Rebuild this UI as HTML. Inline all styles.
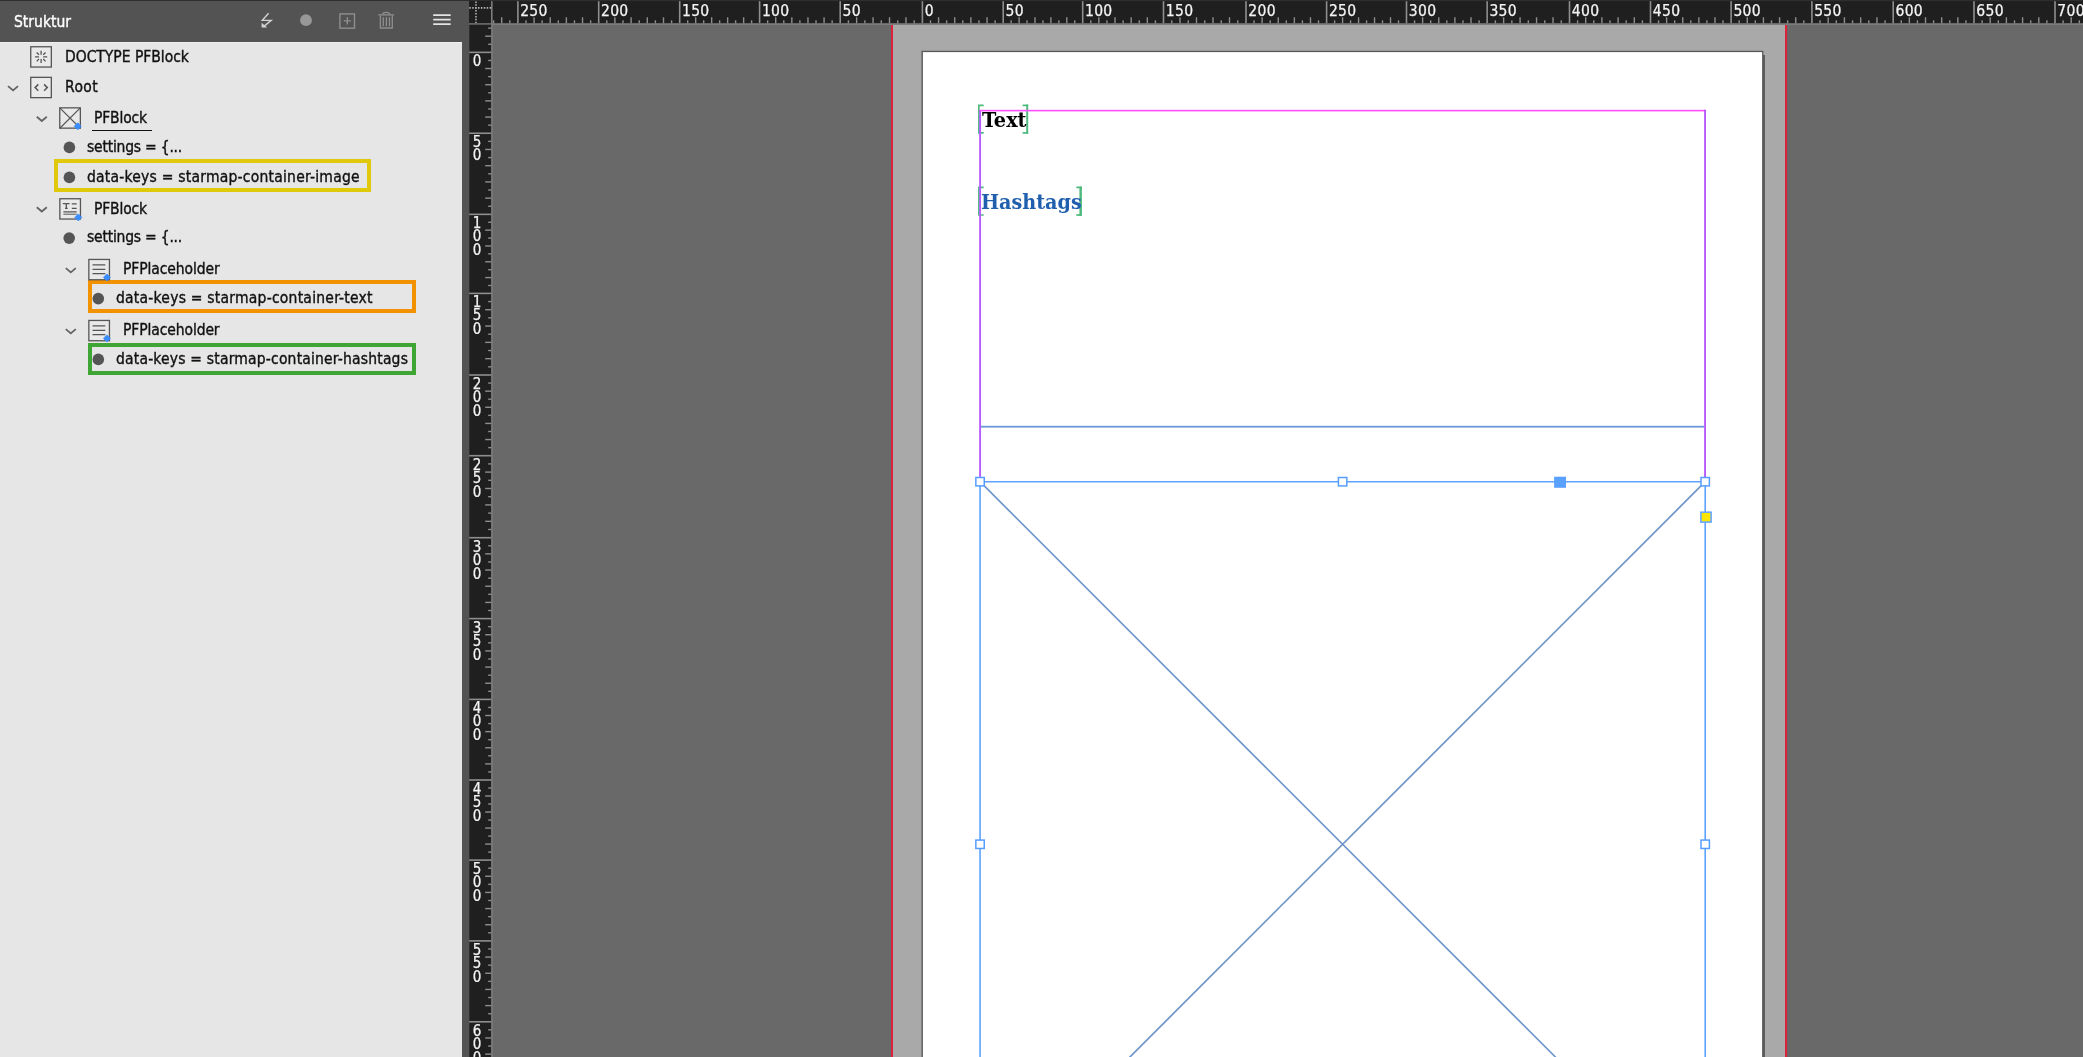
<!DOCTYPE html>
<html lang="de"><head><meta charset="utf-8"><title>Struktur</title>
<style>
html,body{margin:0;padding:0}
body{width:2083px;height:1057px;overflow:hidden;position:relative;background:#696969;font-family:"DejaVu Sans Condensed","DejaVu Sans","Liberation Sans",sans-serif}
.abs{position:absolute}
#panel{position:absolute;left:0;top:0;width:462.2px;height:1057px;background:#e6e6e6}
#phead{position:absolute;left:0;top:0;width:469.2px;height:41.9px;background:#535353}
#pdiv{position:absolute;left:462.2px;top:0;width:7px;height:1057px;background:#535353}
#ttl{position:absolute;will-change:transform;left:14px;top:11.7px;transform:translateY(0.4px);-webkit-text-stroke:0.35px #fff;font-size:15.5px;line-height:20px;color:#fff;white-space:nowrap}
.row{position:absolute;will-change:transform;font-size:15.5px;line-height:20px;height:20px;color:#111;white-space:nowrap;-webkit-text-stroke:0.35px #111}
.hy{display:inline-block;transform:scaleX(1.45);margin:0 1px}
.hl{position:absolute;box-sizing:border-box;border-style:solid;border-width:4.3px}
svg{position:absolute;left:0;top:0;overflow:visible;will-change:transform}
.rl{font-family:"DejaVu Sans Condensed","DejaVu Sans","Liberation Sans",sans-serif;font-size:15.5px;letter-spacing:0.3px;fill:#f4f4f4;stroke:#f4f4f4;stroke-width:0.25px}
.vl{position:absolute;will-change:transform;left:470px;width:14px;writing-mode:vertical-rl;text-orientation:upright;font-family:"DejaVu Sans Condensed","DejaVu Sans","Liberation Sans",sans-serif;font-size:15px;line-height:14px;letter-spacing:-4.7px;color:#f4f4f4;-webkit-text-stroke:0.25px #f4f4f4;white-space:nowrap}
.pt{position:absolute;will-change:transform;font-family:"DejaVu Serif Condensed","DejaVu Serif","Liberation Serif",serif;font-weight:bold;font-size:20.4px;line-height:26px;white-space:nowrap;transform-origin:0 0}
</style></head><body>

<svg width="2083" height="1057" viewBox="0 0 2083 1057" id="canvas">
<rect x="892" y="24.5" width="894" height="1040" fill="#a9a9a9"/>
<rect x="891" y="24.5" width="2" height="1040" fill="#dc213b"/>
<rect x="1785" y="24.5" width="2.1" height="1040" fill="#dc213b"/>
<rect x="1763" y="55" width="2" height="1010" fill="#5e5e5e"/>
<rect x="921.5" y="50.8" width="841.9" height="1010" fill="#575757"/>
<rect x="922.9" y="52.1" width="839.2" height="1010" fill="#ffffff"/>
<path d="M983.70 105.40H978.90V132.90H983.70" stroke="#4fba7d" stroke-width="1.7" fill="none"/>
<rect x="1026.20" y="104.55" width="2.00" height="29.20" fill="#4fba7d"/>
<rect x="1022.60" y="104.55" width="5.60" height="1.7" fill="#4fba7d"/>
<rect x="1022.60" y="132.05" width="5.60" height="1.7" fill="#4fba7d"/>
<path d="M983.70 187.40H978.90V215.00H983.70" stroke="#4fba7d" stroke-width="1.7" fill="none"/>
<rect x="1079.40" y="186.55" width="2.50" height="29.30" fill="#4fba7d"/>
<rect x="1076.30" y="186.55" width="5.60" height="1.7" fill="#4fba7d"/>
<rect x="1076.30" y="214.15" width="5.60" height="1.7" fill="#4fba7d"/>
<rect x="979.2" y="109.8" width="726.8" height="1.6" fill="#ff4dff"/>
<rect x="979.15" y="110.6" width="1.9" height="367" fill="#b75cff"/>
<rect x="1704.15" y="109.8" width="1.85" height="368" fill="#b455ff"/>
<rect x="981" y="425.8" width="723.2" height="1.8" fill="#6a9bd6"/>
<path d="M980.05 481.7L1705.2 1206.8500000000001M1705.2 481.7L980.05 1206.8500000000001" stroke="#6f96cc" stroke-width="1.7" fill="none"/>
<path d="M980.05 1060V481.7H1705.2V1060" stroke="#5da2ff" stroke-width="1.6" fill="none"/>
<rect x="975.85" y="477.50" width="8.4" height="8.4" fill="#fff" stroke="#559eff" stroke-width="1.5"/>
<rect x="1338.42" y="477.50" width="8.4" height="8.4" fill="#fff" stroke="#559eff" stroke-width="1.5"/>
<rect x="1701.00" y="477.50" width="8.4" height="8.4" fill="#fff" stroke="#559eff" stroke-width="1.5"/>
<rect x="975.85" y="840.08" width="8.4" height="8.4" fill="#fff" stroke="#559eff" stroke-width="1.5"/>
<rect x="1701.00" y="840.08" width="8.4" height="8.4" fill="#fff" stroke="#559eff" stroke-width="1.5"/>
<rect x="1554.1" y="476.7" width="11.9" height="11.1" fill="#59a0ff"/>
<rect x="1700.1" y="511.4" width="11.8" height="11.5" fill="#66a8ff"/>
<rect x="1701.7" y="513" width="8.6" height="8.3" fill="#ffe600"/>
</svg>
<div class="pt" style="left:982px;top:107.2px;color:#000;transform:scaleX(1.05)">Text</div>
<div class="pt" style="left:980.5px;top:189px;color:#1f5fae;transform:scaleX(1.045)">Hashtags</div>
<svg width="2083" height="1057" viewBox="0 0 2083 1057" id="rulers">
<rect x="469.2" y="0" width="1614" height="25" fill="#7c7c7c"/>
<rect x="469.2" y="0" width="1614" height="23.2" fill="#1f1f1f"/>
<rect x="469.2" y="0" width="1614" height="1.2" fill="#2e2e2e"/>
<rect x="469.2" y="23.2" width="23.6" height="1057" fill="#7c7c7c"/>
<rect x="469.2" y="24.6" width="21.9" height="1057" fill="#1f1f1f"/>
<rect x="469.2" y="1.2" width="21.9" height="22" fill="#1f1f1f"/>
<g stroke="#b4b4b4" stroke-width="1.6" stroke-dasharray="1.5 1.4" fill="none"><path d="M469.3 7.9H491"/><path d="M475.95 1.4V23"/></g>
<rect x="491" y="1.2" width="1.6" height="23" fill="#7c7c7c"/>
<g fill="#8e8e8e">
<rect x="492.90" y="20.3" width="1.4" height="3" />
<rect x="501.00" y="17.3" width="1.4" height="6" />
<rect x="509.10" y="20.3" width="1.4" height="3" />
<rect x="517.10" y="1.2" width="1.6" height="22" />
<rect x="525.28" y="20.3" width="1.4" height="3" />
<rect x="533.36" y="17.3" width="1.4" height="6" />
<rect x="541.44" y="20.3" width="1.4" height="3" />
<rect x="549.52" y="17.3" width="1.4" height="6" />
<rect x="557.60" y="20.3" width="1.4" height="3" />
<rect x="565.68" y="17.3" width="1.4" height="6" />
<rect x="573.76" y="20.3" width="1.4" height="3" />
<rect x="581.84" y="17.3" width="1.4" height="6" />
<rect x="589.92" y="20.3" width="1.4" height="3" />
<rect x="597.90" y="1.2" width="1.6" height="22" />
<rect x="606.10" y="20.3" width="1.4" height="3" />
<rect x="614.20" y="17.3" width="1.4" height="6" />
<rect x="622.30" y="20.3" width="1.4" height="3" />
<rect x="630.40" y="17.3" width="1.4" height="6" />
<rect x="638.50" y="20.3" width="1.4" height="3" />
<rect x="646.60" y="17.3" width="1.4" height="6" />
<rect x="654.70" y="20.3" width="1.4" height="3" />
<rect x="662.80" y="17.3" width="1.4" height="6" />
<rect x="670.90" y="20.3" width="1.4" height="3" />
<rect x="678.90" y="1.2" width="1.6" height="22" />
<rect x="686.99" y="20.3" width="1.4" height="3" />
<rect x="694.98" y="17.3" width="1.4" height="6" />
<rect x="702.97" y="20.3" width="1.4" height="3" />
<rect x="710.96" y="17.3" width="1.4" height="6" />
<rect x="718.95" y="20.3" width="1.4" height="3" />
<rect x="726.94" y="17.3" width="1.4" height="6" />
<rect x="734.93" y="20.3" width="1.4" height="3" />
<rect x="742.92" y="17.3" width="1.4" height="6" />
<rect x="750.91" y="20.3" width="1.4" height="3" />
<rect x="758.80" y="1.2" width="1.6" height="22" />
<rect x="766.96" y="20.3" width="1.4" height="3" />
<rect x="775.02" y="17.3" width="1.4" height="6" />
<rect x="783.08" y="20.3" width="1.4" height="3" />
<rect x="791.14" y="17.3" width="1.4" height="6" />
<rect x="799.20" y="20.3" width="1.4" height="3" />
<rect x="807.26" y="17.3" width="1.4" height="6" />
<rect x="815.32" y="20.3" width="1.4" height="3" />
<rect x="823.38" y="17.3" width="1.4" height="6" />
<rect x="831.44" y="20.3" width="1.4" height="3" />
<rect x="839.40" y="1.2" width="1.6" height="22" />
<rect x="847.72" y="20.3" width="1.4" height="3" />
<rect x="855.94" y="17.3" width="1.4" height="6" />
<rect x="864.16" y="20.3" width="1.4" height="3" />
<rect x="872.38" y="17.3" width="1.4" height="6" />
<rect x="880.60" y="20.3" width="1.4" height="3" />
<rect x="888.82" y="17.3" width="1.4" height="6" />
<rect x="897.04" y="20.3" width="1.4" height="3" />
<rect x="905.26" y="17.3" width="1.4" height="6" />
<rect x="913.48" y="20.3" width="1.4" height="3" />
<rect x="921.60" y="1.2" width="1.6" height="22" />
<rect x="929.78" y="20.3" width="1.4" height="3" />
<rect x="937.86" y="17.3" width="1.4" height="6" />
<rect x="945.94" y="20.3" width="1.4" height="3" />
<rect x="954.02" y="17.3" width="1.4" height="6" />
<rect x="962.10" y="20.3" width="1.4" height="3" />
<rect x="970.18" y="17.3" width="1.4" height="6" />
<rect x="978.26" y="20.3" width="1.4" height="3" />
<rect x="986.34" y="17.3" width="1.4" height="6" />
<rect x="994.42" y="20.3" width="1.4" height="3" />
<rect x="1002.40" y="1.2" width="1.6" height="22" />
<rect x="1010.45" y="20.3" width="1.4" height="3" />
<rect x="1018.40" y="17.3" width="1.4" height="6" />
<rect x="1026.35" y="20.3" width="1.4" height="3" />
<rect x="1034.30" y="17.3" width="1.4" height="6" />
<rect x="1042.25" y="20.3" width="1.4" height="3" />
<rect x="1050.20" y="17.3" width="1.4" height="6" />
<rect x="1058.15" y="20.3" width="1.4" height="3" />
<rect x="1066.10" y="17.3" width="1.4" height="6" />
<rect x="1074.05" y="20.3" width="1.4" height="3" />
<rect x="1081.90" y="1.2" width="1.6" height="22" />
<rect x="1090.08" y="20.3" width="1.4" height="3" />
<rect x="1098.16" y="17.3" width="1.4" height="6" />
<rect x="1106.24" y="20.3" width="1.4" height="3" />
<rect x="1114.32" y="17.3" width="1.4" height="6" />
<rect x="1122.40" y="20.3" width="1.4" height="3" />
<rect x="1130.48" y="17.3" width="1.4" height="6" />
<rect x="1138.56" y="20.3" width="1.4" height="3" />
<rect x="1146.64" y="17.3" width="1.4" height="6" />
<rect x="1154.72" y="20.3" width="1.4" height="3" />
<rect x="1162.70" y="1.2" width="1.6" height="22" />
<rect x="1171.05" y="20.3" width="1.4" height="3" />
<rect x="1179.30" y="17.3" width="1.4" height="6" />
<rect x="1187.55" y="20.3" width="1.4" height="3" />
<rect x="1195.80" y="17.3" width="1.4" height="6" />
<rect x="1204.05" y="20.3" width="1.4" height="3" />
<rect x="1212.30" y="17.3" width="1.4" height="6" />
<rect x="1220.55" y="20.3" width="1.4" height="3" />
<rect x="1228.80" y="17.3" width="1.4" height="6" />
<rect x="1237.05" y="20.3" width="1.4" height="3" />
<rect x="1245.20" y="1.2" width="1.6" height="22" />
<rect x="1253.36" y="20.3" width="1.4" height="3" />
<rect x="1261.42" y="17.3" width="1.4" height="6" />
<rect x="1269.48" y="20.3" width="1.4" height="3" />
<rect x="1277.54" y="17.3" width="1.4" height="6" />
<rect x="1285.60" y="20.3" width="1.4" height="3" />
<rect x="1293.66" y="17.3" width="1.4" height="6" />
<rect x="1301.72" y="20.3" width="1.4" height="3" />
<rect x="1309.78" y="17.3" width="1.4" height="6" />
<rect x="1317.84" y="20.3" width="1.4" height="3" />
<rect x="1325.80" y="1.2" width="1.6" height="22" />
<rect x="1333.89" y="20.3" width="1.4" height="3" />
<rect x="1341.88" y="17.3" width="1.4" height="6" />
<rect x="1349.87" y="20.3" width="1.4" height="3" />
<rect x="1357.86" y="17.3" width="1.4" height="6" />
<rect x="1365.85" y="20.3" width="1.4" height="3" />
<rect x="1373.84" y="17.3" width="1.4" height="6" />
<rect x="1381.83" y="20.3" width="1.4" height="3" />
<rect x="1389.82" y="17.3" width="1.4" height="6" />
<rect x="1397.81" y="20.3" width="1.4" height="3" />
<rect x="1405.70" y="1.2" width="1.6" height="22" />
<rect x="1413.87" y="20.3" width="1.4" height="3" />
<rect x="1421.93" y="17.3" width="1.4" height="6" />
<rect x="1429.99" y="20.3" width="1.4" height="3" />
<rect x="1438.06" y="17.3" width="1.4" height="6" />
<rect x="1446.12" y="20.3" width="1.4" height="3" />
<rect x="1454.19" y="17.3" width="1.4" height="6" />
<rect x="1462.26" y="20.3" width="1.4" height="3" />
<rect x="1470.32" y="17.3" width="1.4" height="6" />
<rect x="1478.38" y="20.3" width="1.4" height="3" />
<rect x="1486.35" y="1.2" width="1.6" height="22" />
<rect x="1494.68" y="20.3" width="1.4" height="3" />
<rect x="1502.92" y="17.3" width="1.4" height="6" />
<rect x="1511.15" y="20.3" width="1.4" height="3" />
<rect x="1519.39" y="17.3" width="1.4" height="6" />
<rect x="1527.62" y="20.3" width="1.4" height="3" />
<rect x="1535.86" y="17.3" width="1.4" height="6" />
<rect x="1544.10" y="20.3" width="1.4" height="3" />
<rect x="1552.33" y="17.3" width="1.4" height="6" />
<rect x="1560.57" y="20.3" width="1.4" height="3" />
<rect x="1568.70" y="1.2" width="1.6" height="22" />
<rect x="1576.90" y="20.3" width="1.4" height="3" />
<rect x="1585.00" y="17.3" width="1.4" height="6" />
<rect x="1593.10" y="20.3" width="1.4" height="3" />
<rect x="1601.20" y="17.3" width="1.4" height="6" />
<rect x="1609.30" y="20.3" width="1.4" height="3" />
<rect x="1617.40" y="17.3" width="1.4" height="6" />
<rect x="1625.50" y="20.3" width="1.4" height="3" />
<rect x="1633.60" y="17.3" width="1.4" height="6" />
<rect x="1641.70" y="20.3" width="1.4" height="3" />
<rect x="1649.70" y="1.2" width="1.6" height="22" />
<rect x="1657.86" y="20.3" width="1.4" height="3" />
<rect x="1665.92" y="17.3" width="1.4" height="6" />
<rect x="1673.98" y="20.3" width="1.4" height="3" />
<rect x="1682.04" y="17.3" width="1.4" height="6" />
<rect x="1690.10" y="20.3" width="1.4" height="3" />
<rect x="1698.16" y="17.3" width="1.4" height="6" />
<rect x="1706.22" y="20.3" width="1.4" height="3" />
<rect x="1714.28" y="17.3" width="1.4" height="6" />
<rect x="1722.34" y="20.3" width="1.4" height="3" />
<rect x="1730.30" y="1.2" width="1.6" height="22" />
<rect x="1738.48" y="20.3" width="1.4" height="3" />
<rect x="1746.56" y="17.3" width="1.4" height="6" />
<rect x="1754.64" y="20.3" width="1.4" height="3" />
<rect x="1762.72" y="17.3" width="1.4" height="6" />
<rect x="1770.80" y="20.3" width="1.4" height="3" />
<rect x="1778.88" y="17.3" width="1.4" height="6" />
<rect x="1786.96" y="20.3" width="1.4" height="3" />
<rect x="1795.04" y="17.3" width="1.4" height="6" />
<rect x="1803.12" y="20.3" width="1.4" height="3" />
<rect x="1811.10" y="1.2" width="1.6" height="22" />
<rect x="1819.33" y="20.3" width="1.4" height="3" />
<rect x="1827.46" y="17.3" width="1.4" height="6" />
<rect x="1835.59" y="20.3" width="1.4" height="3" />
<rect x="1843.72" y="17.3" width="1.4" height="6" />
<rect x="1851.85" y="20.3" width="1.4" height="3" />
<rect x="1859.98" y="17.3" width="1.4" height="6" />
<rect x="1868.11" y="20.3" width="1.4" height="3" />
<rect x="1876.24" y="17.3" width="1.4" height="6" />
<rect x="1884.37" y="20.3" width="1.4" height="3" />
<rect x="1892.40" y="1.2" width="1.6" height="22" />
<rect x="1900.58" y="20.3" width="1.4" height="3" />
<rect x="1908.66" y="17.3" width="1.4" height="6" />
<rect x="1916.74" y="20.3" width="1.4" height="3" />
<rect x="1924.82" y="17.3" width="1.4" height="6" />
<rect x="1932.90" y="20.3" width="1.4" height="3" />
<rect x="1940.98" y="17.3" width="1.4" height="6" />
<rect x="1949.06" y="20.3" width="1.4" height="3" />
<rect x="1957.14" y="17.3" width="1.4" height="6" />
<rect x="1965.22" y="20.3" width="1.4" height="3" />
<rect x="1973.20" y="1.2" width="1.6" height="22" />
<rect x="1981.40" y="20.3" width="1.4" height="3" />
<rect x="1989.50" y="17.3" width="1.4" height="6" />
<rect x="1997.60" y="20.3" width="1.4" height="3" />
<rect x="2005.70" y="17.3" width="1.4" height="6" />
<rect x="2013.80" y="20.3" width="1.4" height="3" />
<rect x="2021.90" y="17.3" width="1.4" height="6" />
<rect x="2030.00" y="20.3" width="1.4" height="3" />
<rect x="2038.10" y="17.3" width="1.4" height="6" />
<rect x="2046.20" y="20.3" width="1.4" height="3" />
<rect x="2054.20" y="1.2" width="1.6" height="22" />
<rect x="2062.40" y="20.3" width="1.4" height="3" />
<rect x="2070.50" y="17.3" width="1.4" height="6" />
<rect x="2078.60" y="20.3" width="1.4" height="3" />
<rect x="2086.70" y="17.3" width="1.4" height="6" />
<rect x="488.2" y="27.41" width="3" height="1.4" />
<rect x="485.2" y="35.49" width="6" height="1.4" />
<rect x="488.2" y="43.57" width="3" height="1.4" />
<rect x="469.2" y="51.56" width="22" height="1.6" />
<rect x="488.2" y="59.75" width="3" height="1.4" />
<rect x="485.2" y="67.84" width="6" height="1.4" />
<rect x="488.2" y="75.93" width="3" height="1.4" />
<rect x="485.2" y="84.02" width="6" height="1.4" />
<rect x="488.2" y="92.11" width="3" height="1.4" />
<rect x="485.2" y="100.19" width="6" height="1.4" />
<rect x="488.2" y="108.28" width="3" height="1.4" />
<rect x="485.2" y="116.37" width="6" height="1.4" />
<rect x="488.2" y="124.46" width="3" height="1.4" />
<rect x="469.2" y="132.45" width="22" height="1.6" />
<rect x="488.2" y="140.66" width="3" height="1.4" />
<rect x="485.2" y="148.77" width="6" height="1.4" />
<rect x="488.2" y="156.88" width="3" height="1.4" />
<rect x="485.2" y="164.99" width="6" height="1.4" />
<rect x="488.2" y="173.10" width="3" height="1.4" />
<rect x="485.2" y="181.21" width="6" height="1.4" />
<rect x="488.2" y="189.32" width="3" height="1.4" />
<rect x="485.2" y="197.43" width="6" height="1.4" />
<rect x="488.2" y="205.54" width="3" height="1.4" />
<rect x="469.2" y="213.55" width="22" height="1.6" />
<rect x="488.2" y="221.56" width="3" height="1.4" />
<rect x="485.2" y="229.46" width="6" height="1.4" />
<rect x="488.2" y="237.37" width="3" height="1.4" />
<rect x="485.2" y="245.27" width="6" height="1.4" />
<rect x="488.2" y="253.18" width="3" height="1.4" />
<rect x="485.2" y="261.08" width="6" height="1.4" />
<rect x="488.2" y="268.99" width="3" height="1.4" />
<rect x="485.2" y="276.89" width="6" height="1.4" />
<rect x="488.2" y="284.80" width="3" height="1.4" />
<rect x="469.2" y="292.60" width="22" height="1.6" />
<rect x="488.2" y="300.86" width="3" height="1.4" />
<rect x="485.2" y="309.02" width="6" height="1.4" />
<rect x="488.2" y="317.18" width="3" height="1.4" />
<rect x="485.2" y="325.34" width="6" height="1.4" />
<rect x="488.2" y="333.50" width="3" height="1.4" />
<rect x="485.2" y="341.66" width="6" height="1.4" />
<rect x="488.2" y="349.82" width="3" height="1.4" />
<rect x="485.2" y="357.98" width="6" height="1.4" />
<rect x="488.2" y="366.14" width="3" height="1.4" />
<rect x="469.2" y="374.20" width="22" height="1.6" />
<rect x="488.2" y="382.37" width="3" height="1.4" />
<rect x="485.2" y="390.44" width="6" height="1.4" />
<rect x="488.2" y="398.51" width="3" height="1.4" />
<rect x="485.2" y="406.58" width="6" height="1.4" />
<rect x="488.2" y="414.65" width="3" height="1.4" />
<rect x="485.2" y="422.72" width="6" height="1.4" />
<rect x="488.2" y="430.79" width="3" height="1.4" />
<rect x="485.2" y="438.86" width="6" height="1.4" />
<rect x="488.2" y="446.93" width="3" height="1.4" />
<rect x="469.2" y="454.90" width="22" height="1.6" />
<rect x="488.2" y="463.20" width="3" height="1.4" />
<rect x="485.2" y="471.40" width="6" height="1.4" />
<rect x="488.2" y="479.60" width="3" height="1.4" />
<rect x="485.2" y="487.80" width="6" height="1.4" />
<rect x="488.2" y="496.00" width="3" height="1.4" />
<rect x="485.2" y="504.20" width="6" height="1.4" />
<rect x="488.2" y="512.40" width="3" height="1.4" />
<rect x="485.2" y="520.60" width="6" height="1.4" />
<rect x="488.2" y="528.80" width="3" height="1.4" />
<rect x="469.2" y="536.90" width="22" height="1.6" />
<rect x="488.2" y="545.09" width="3" height="1.4" />
<rect x="485.2" y="553.18" width="6" height="1.4" />
<rect x="488.2" y="561.27" width="3" height="1.4" />
<rect x="485.2" y="569.36" width="6" height="1.4" />
<rect x="488.2" y="577.45" width="3" height="1.4" />
<rect x="485.2" y="585.54" width="6" height="1.4" />
<rect x="488.2" y="593.63" width="3" height="1.4" />
<rect x="485.2" y="601.72" width="6" height="1.4" />
<rect x="488.2" y="609.81" width="3" height="1.4" />
<rect x="469.2" y="617.80" width="22" height="1.6" />
<rect x="488.2" y="625.98" width="3" height="1.4" />
<rect x="485.2" y="634.06" width="6" height="1.4" />
<rect x="488.2" y="642.14" width="3" height="1.4" />
<rect x="485.2" y="650.22" width="6" height="1.4" />
<rect x="488.2" y="658.30" width="3" height="1.4" />
<rect x="485.2" y="666.38" width="6" height="1.4" />
<rect x="488.2" y="674.46" width="3" height="1.4" />
<rect x="485.2" y="682.54" width="6" height="1.4" />
<rect x="488.2" y="690.62" width="3" height="1.4" />
<rect x="469.2" y="698.60" width="22" height="1.6" />
<rect x="488.2" y="706.76" width="3" height="1.4" />
<rect x="485.2" y="714.82" width="6" height="1.4" />
<rect x="488.2" y="722.88" width="3" height="1.4" />
<rect x="485.2" y="730.94" width="6" height="1.4" />
<rect x="488.2" y="739.00" width="3" height="1.4" />
<rect x="485.2" y="747.06" width="6" height="1.4" />
<rect x="488.2" y="755.12" width="3" height="1.4" />
<rect x="485.2" y="763.18" width="6" height="1.4" />
<rect x="488.2" y="771.24" width="3" height="1.4" />
<rect x="469.2" y="779.20" width="22" height="1.6" />
<rect x="488.2" y="787.31" width="3" height="1.4" />
<rect x="485.2" y="795.32" width="6" height="1.4" />
<rect x="488.2" y="803.33" width="3" height="1.4" />
<rect x="485.2" y="811.34" width="6" height="1.4" />
<rect x="488.2" y="819.35" width="3" height="1.4" />
<rect x="485.2" y="827.36" width="6" height="1.4" />
<rect x="488.2" y="835.37" width="3" height="1.4" />
<rect x="485.2" y="843.38" width="6" height="1.4" />
<rect x="488.2" y="851.39" width="3" height="1.4" />
<rect x="469.2" y="859.30" width="22" height="1.6" />
<rect x="488.2" y="867.48" width="3" height="1.4" />
<rect x="485.2" y="875.56" width="6" height="1.4" />
<rect x="488.2" y="883.64" width="3" height="1.4" />
<rect x="485.2" y="891.72" width="6" height="1.4" />
<rect x="488.2" y="899.80" width="3" height="1.4" />
<rect x="485.2" y="907.88" width="6" height="1.4" />
<rect x="488.2" y="915.96" width="3" height="1.4" />
<rect x="485.2" y="924.04" width="6" height="1.4" />
<rect x="488.2" y="932.12" width="3" height="1.4" />
<rect x="469.2" y="940.10" width="22" height="1.6" />
<rect x="488.2" y="948.29" width="3" height="1.4" />
<rect x="485.2" y="956.38" width="6" height="1.4" />
<rect x="488.2" y="964.47" width="3" height="1.4" />
<rect x="485.2" y="972.56" width="6" height="1.4" />
<rect x="488.2" y="980.65" width="3" height="1.4" />
<rect x="485.2" y="988.74" width="6" height="1.4" />
<rect x="488.2" y="996.83" width="3" height="1.4" />
<rect x="485.2" y="1004.92" width="6" height="1.4" />
<rect x="488.2" y="1013.01" width="3" height="1.4" />
<rect x="469.2" y="1021.00" width="22" height="1.6" />
<rect x="488.2" y="1029.18" width="3" height="1.4" />
<rect x="485.2" y="1037.27" width="6" height="1.4" />
<rect x="488.2" y="1045.36" width="3" height="1.4" />
<rect x="485.2" y="1053.44" width="6" height="1.4" />
<rect x="488.2" y="1061.52" width="3" height="1.4" />
<rect x="485.2" y="1069.61" width="6" height="1.4" />
<rect x="488.2" y="1077.69" width="3" height="1.4" />
<rect x="485.2" y="1085.78" width="6" height="1.4" />
</g>
<g class="rl">
<text x="520.20" y="15.5">250</text>
<text x="601.00" y="15.5">200</text>
<text x="682.00" y="15.5">150</text>
<text x="761.90" y="15.5">100</text>
<text x="842.50" y="15.5">50</text>
<text x="924.70" y="15.5">0</text>
<text x="1005.50" y="15.5">50</text>
<text x="1085.00" y="15.5">100</text>
<text x="1165.80" y="15.5">150</text>
<text x="1248.30" y="15.5">200</text>
<text x="1328.90" y="15.5">250</text>
<text x="1408.80" y="15.5">300</text>
<text x="1489.45" y="15.5">350</text>
<text x="1571.80" y="15.5">400</text>
<text x="1652.80" y="15.5">450</text>
<text x="1733.40" y="15.5">500</text>
<text x="1814.20" y="15.5">550</text>
<text x="1895.50" y="15.5">600</text>
<text x="1976.30" y="15.5">650</text>
<text x="2057.30" y="15.5">700</text>
</g>
</svg>
<div class="vl" style="top:52.36px">0</div>
<div class="vl" style="top:133.25px">50</div>
<div class="vl" style="top:214.35px">100</div>
<div class="vl" style="top:293.40px">150</div>
<div class="vl" style="top:375.00px">200</div>
<div class="vl" style="top:455.70px">250</div>
<div class="vl" style="top:537.70px">300</div>
<div class="vl" style="top:618.60px">350</div>
<div class="vl" style="top:699.40px">400</div>
<div class="vl" style="top:780.00px">450</div>
<div class="vl" style="top:860.10px">500</div>
<div class="vl" style="top:940.90px">550</div>
<div class="vl" style="top:1021.80px">600</div>
<div id="panel"></div><div id="pdiv"></div><div id="phead"></div>
<div class="abs" style="left:0;top:0;width:469.2px;height:1.4px;background:#2e2e2e"></div>
<div class="abs" style="left:0;top:41.9px;width:462.2px;height:1.3px;background:#f0f0f0"></div>
<div id="ttl">Struktur</div>
<div class="hl" style="left:54px;top:159.2px;width:317px;height:33.3px;border-color:#dfc90a"></div>
<div class="hl" style="left:88.4px;top:280.1px;width:327.3px;height:32.9px;border-color:#f39200"></div>
<div class="hl" style="left:88.4px;top:342.7px;width:327.3px;height:32.8px;border-color:#3fa535"></div>
<div class="row" id="r0" style="left:65.00px;top:46.64px;letter-spacing:-0.031px;transform:translateY(-0.20px)">DOCTYPE PFBlock</div>
<div class="row" id="r1" style="left:65.00px;top:76.64px;letter-spacing:0.400px;transform:translateY(-0.10px)">Root</div>
<div class="row" id="r2" style="left:94.00px;top:106.64px;letter-spacing:-0.161px;transform:translateY(0.50px)">PFBlock</div>
<div class="row" id="r3" style="left:87.00px;top:136.64px;letter-spacing:-0.219px;transform:translateY(-0.50px)">settings = {...</div>
<div class="row" id="r4" style="left:87.00px;top:166.64px;letter-spacing:0.225px;transform:translateY(-0.40px)">data-keys = starmap-container-image</div>
<div class="row" id="r5" style="left:94.00px;top:198.64px;letter-spacing:-0.178px;transform:translateY(-0.50px)">PFBlock</div>
<div class="row" id="r6" style="left:87.00px;top:226.64px;letter-spacing:-0.219px;transform:translateY(0.30px)">settings = {...</div>
<div class="row" id="r7" style="left:123.00px;top:258.64px;letter-spacing:-0.094px">PFPlaceholder</div>
<div class="row" id="r8" style="left:116.00px;top:287.64px;letter-spacing:0.230px;transform:translateY(-0.10px)">data-keys = starmap-container-text</div>
<div class="row" id="r9" style="left:123.00px;top:319.64px;letter-spacing:-0.111px;transform:translateY(-0.20px)">PFPlaceholder</div>
<div class="row" id="r10" style="left:116.00px;top:348.64px;letter-spacing:0.185px;transform:translateY(-0.30px)">data-keys = starmap-container-hashtags</div>
<div class="abs" style="left:92.3px;top:129.9px;width:59.5px;height:1.6px;background:#111"></div>
<svg width="470" height="400" viewBox="0 0 470 400" id="icons">
<path d="M268.6 13.2L262.3 20.4H271.2L263.6 26.6" stroke="#d2d2d2" stroke-width="1.4" fill="none" stroke-linejoin="miter"/>
<path d="M261.6 22.8V27.6H267.2Z" fill="#d2d2d2"/>
<circle cx="306" cy="20.2" r="5.9" fill="#989898"/>
<rect x="339.9" y="13.9" width="14.6" height="14.3" fill="none" stroke="#8e8e8e" stroke-width="1.4"/>
<path d="M343.7 20.9H350.9M347.3 17.3V24.5" stroke="#8e8e8e" stroke-width="1.4"/>
<g stroke="#8e8e8e" stroke-width="1.3" fill="none"><path d="M378.3 14.9H394.1"/><path d="M382.6 14.6C382.6 11.6 389.8 11.6 389.8 14.6"/><path d="M380.4 15.5V28H392.3V15.5"/><path d="M383.3 17.2V26.2M386.4 17.2V26.2M389.5 17.2V26.2"/></g>
<g stroke="#e4e4e4" stroke-width="1.6"><path d="M433.2 15.1H450.7M433.2 19.6H450.7M433.2 24.1H450.7"/></g>
<rect x="30.75" y="46.75" width="20.60" height="20.30" fill="#e9e9e9" stroke="#565656" stroke-width="1.3"/>
<path d="M43.20 56.90L47.20 56.90M43.22 59.02L45.55 61.35M41.10 59.00L41.10 63.00M38.98 59.02L36.65 61.35M39.00 56.90L35.00 56.90M38.98 54.78L36.65 52.45M41.10 54.80L41.10 50.80M43.22 54.78L45.55 52.45" stroke="#565656" stroke-width="1.3" fill="none"/>
<path d="M8.05 86.10L13.05 90.40L18.05 86.10" stroke="#646464" stroke-width="1.8" fill="none"/>
<rect x="30.75" y="77.35" width="20.60" height="20.30" fill="#e9e9e9" stroke="#565656" stroke-width="1.3"/>
<path d="M38.3 84.4L35.1 87.6L38.3 90.8M44.1 84.4L47.3 87.6L44.1 90.8" stroke="#565656" stroke-width="1.5" fill="none"/>
<path d="M36.80 116.70L41.80 121.00L46.80 116.70" stroke="#646464" stroke-width="1.8" fill="none"/>
<rect x="59.75" y="107.85" width="20.60" height="20.30" fill="#e9e9e9" stroke="#565656" stroke-width="1.3"/>
<path d="M59.8 107.9L80.3 128.2M80.3 107.9L59.8 128.2" stroke="#565656" stroke-width="1.2"/>
<path d="M74.25 126.30L77.75 122.80L81.25 126.30L77.75 129.80Z" fill="#3a8dff" stroke="#3a8dff" stroke-width="0.8" stroke-linejoin="round"/>
<circle cx="69.4" cy="147.4" r="5.8" fill="#555"/>
<circle cx="69.4" cy="177.4" r="5.8" fill="#555"/>
<path d="M36.80 207.20L41.80 211.50L46.80 207.20" stroke="#646464" stroke-width="1.8" fill="none"/>
<rect x="59.85" y="198.75" width="20.60" height="20.30" fill="#e9e9e9" stroke="#565656" stroke-width="1.3"/>
<g stroke="#565656" stroke-width="1.3" fill="none"><path d="M62.8 203.6H69.6M66.3 203.6V208.4M65 208.4H67.7"/><path d="M71.8 203.8H76.7M71.8 208.4H76.7M63.4 211.8H76.7"/><path d="M63.4 214.2H76.7" stroke-width="1"/></g>
<path d="M74.80 217.40L78.30 213.90L81.80 217.40L78.30 220.90Z" fill="#3a8dff" stroke="#3a8dff" stroke-width="0.8" stroke-linejoin="round"/>
<circle cx="69.2" cy="238.1" r="5.8" fill="#555"/>
<path d="M65.80 268.10L70.80 272.40L75.80 268.10" stroke="#646464" stroke-width="1.8" fill="none"/>
<rect x="88.85" y="259.45" width="20.60" height="20.30" fill="#e9e9e9" stroke="#565656" stroke-width="1.3"/>
<g stroke="#565656" stroke-width="1.3"><path d="M92.50 264.80H105.30M92.50 269.30H105.30M92.50 273.60H105.30"/></g>
<path d="M103.40 277.40L106.90 273.90L110.40 277.40L106.90 280.90Z" fill="#3a8dff" stroke="#3a8dff" stroke-width="0.8" stroke-linejoin="round"/>
<circle cx="98.3" cy="298.6" r="5.8" fill="#555"/>
<path d="M65.80 329.10L70.80 333.40L75.80 329.10" stroke="#646464" stroke-width="1.8" fill="none"/>
<rect x="88.85" y="320.45" width="20.60" height="20.30" fill="#e9e9e9" stroke="#565656" stroke-width="1.3"/>
<g stroke="#565656" stroke-width="1.3"><path d="M92.50 325.80H105.30M92.50 330.30H105.30M92.50 334.60H105.30"/></g>
<path d="M103.40 338.40L106.90 334.90L110.40 338.40L106.90 341.90Z" fill="#3a8dff" stroke="#3a8dff" stroke-width="0.8" stroke-linejoin="round"/>
<circle cx="98.3" cy="359.4" r="5.8" fill="#555"/>
</svg>
</body></html>
